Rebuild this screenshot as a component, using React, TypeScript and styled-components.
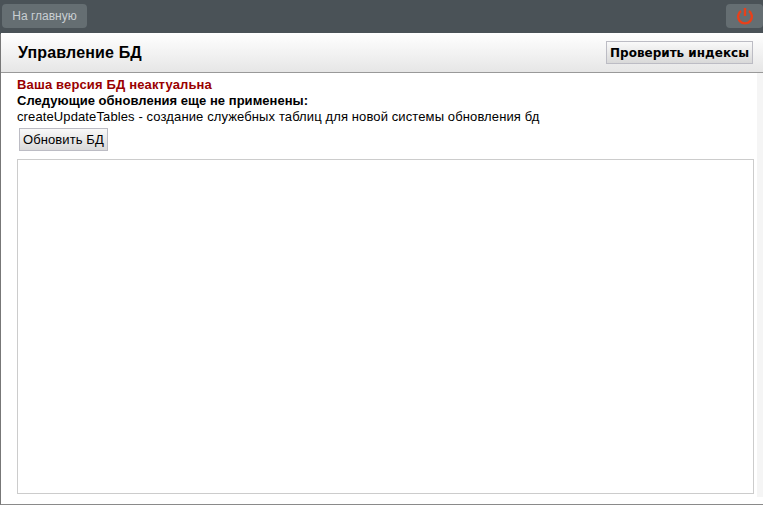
import styled, { createGlobalStyle } from "styled-components";

const GlobalStyle = createGlobalStyle`
  html, body {
    margin: 0;
    padding: 0;
    height: 100%;
    overflow: hidden;
  }
  body {
    background: #4a5257;
    font-family: "Liberation Sans", Arial, sans-serif;
  }
`;

const Page = styled.div`
  display: flex;
  flex-direction: column;
  width: 763px;
  height: 505px;
`;

const TopBar = styled.div`
  display: flex;
  justify-content: space-between;
  align-items: flex-start;
  height: 33px;
  padding: 4px 0 0 2px;
  box-sizing: border-box;
  background: #4a5257;
`;

const TopButton = styled.div<{ $icon?: boolean }>`
  display: flex;
  align-items: center;
  justify-content: center;
  height: 24px;
  width: ${(p) => (p.$icon ? "37px" : "85px")};
  border-radius: 4px;
  background: #656e72;
  color: #c9cfd2;
  font-size: 12px;
`;

const Panel = styled.div`
  flex: 1;
  display: flex;
  flex-direction: column;
  min-height: 0;
  background: #fff;
  border-left: 1px solid #777;
  border-bottom: 1px solid #8a8a8a;
  border-top-left-radius: 3px;
`;

const PanelHeader = styled.div`
  display: flex;
  justify-content: space-between;
  align-items: center;
  height: 39px;
  padding: 0 10px 0 17px;
  flex-shrink: 0;
  background: linear-gradient(#ffffff, #e6e6e6);
  border-bottom: 1px solid #999;
`;

const PanelTitle = styled.h1`
  margin: 0;
  font-size: 16px;
  font-weight: bold;
  letter-spacing: 0.15px;
  color: #000;
`;

const Button = styled.button<{ $bold?: boolean }>`
  display: block;
  height: 23px;
  padding: 0 3px;
  border: 1px solid #bcbcc4;
  border-radius: 0;
  background: linear-gradient(#f9f9f9, #d9d9d9);
  color: #000;
  font-family: ${(p) =>
    p.$bold ? '"DejaVu Sans", sans-serif' : '"Liberation Sans", Arial, sans-serif'};
  font-weight: ${(p) => (p.$bold ? "bold" : "normal")};
  font-size: ${(p) => (p.$bold ? "12px" : "13px")};
  letter-spacing: ${(p) => (p.$bold ? "0" : "0.1px")};
`;

const PanelBody = styled.div`
  flex: 1;
  display: flex;
  min-height: 0;
`;

const Content = styled.div`
  flex: 1;
  display: flex;
  flex-direction: column;
  padding: 4px 3px 10px 16px;
  min-width: 0;
`;

const Line = styled.div<{ $bold?: boolean; $color?: string; $spacing: number }>`
  font-size: 13px;
  line-height: 16px;
  font-weight: ${(p) => (p.$bold ? "bold" : "normal")};
  letter-spacing: ${(p) => p.$spacing}px;
  color: ${(p) => p.$color ?? "#000"};
`;

const UpdateRow = styled.div`
  padding: 3px 0 8px 2px;
`;

const LogBox = styled.div`
  flex: 1;
  border: 1px solid #ccc;
  background: #fff;
`;

const ScrollTrack = styled.div`
  width: 6px;
  margin-bottom: 7px;
  background: #f5f5f5;
`;

function PowerIcon() {
  return (
    <svg width="18" height="18" viewBox="0 0 18 18" fill="none" stroke="#e8401a" strokeWidth="2.4">
      <path d="M9 1v8" />
      <path d="M5 3.9a6.9 6.9 0 1 0 8 0" />
    </svg>
  );
}

export default function App() {
  return (
    <Page>
      <GlobalStyle />
      <TopBar>
        <TopButton>На главную</TopButton>
        <TopButton $icon>
          <PowerIcon />
        </TopButton>
      </TopBar>
      <Panel>
        <PanelHeader>
          <PanelTitle>Управление БД</PanelTitle>
          <Button $bold>Проверить индексы</Button>
        </PanelHeader>
        <PanelBody>
          <Content>
            <Line $bold $color="#990000" $spacing={0.15}>Ваша версия БД неактуальна</Line>
            <Line $bold $spacing={0.03}>Следующие обновления еще не применены:</Line>
            <Line $spacing={0.115}>createUpdateTables - создание служебных таблиц для новой системы обновления бд</Line>
            <UpdateRow>
              <Button>Обновить БД</Button>
            </UpdateRow>
            <LogBox />
          </Content>
          <ScrollTrack />
        </PanelBody>
      </Panel>
    </Page>
  );
}
